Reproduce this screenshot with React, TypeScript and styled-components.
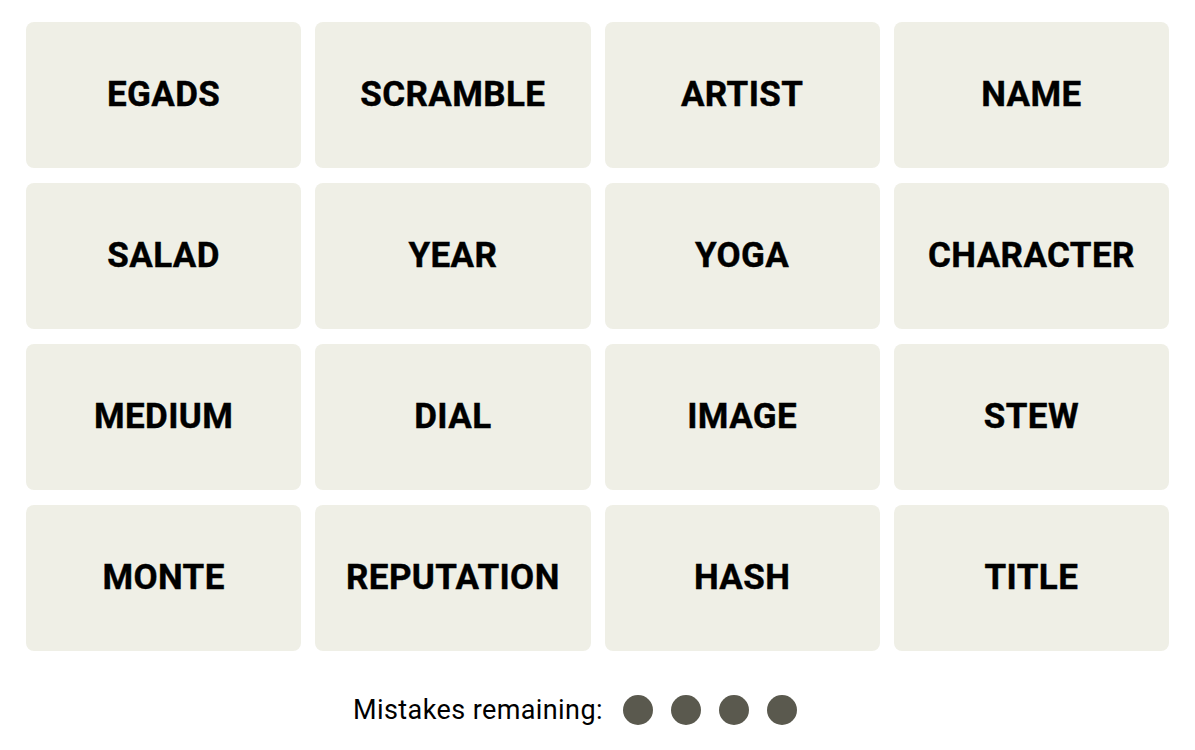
import styled, { createGlobalStyle } from 'styled-components';

const GlobalStyle = createGlobalStyle`
  body {
    margin: 0;
    background: #ffffff;
    font-family: Roboto, "Liberation Sans", sans-serif;
  }
`;

const Page = styled.main`
  width: 1195px;
  padding: 22px 26px 0;
  box-sizing: border-box;
`;

const Board = styled.div`
  display: grid;
  grid-template-columns: repeat(4, 1fr);
  grid-auto-rows: 146px;
  column-gap: 14px;
  row-gap: 15px;
`;

const Tile = styled.button`
  display: flex;
  align-items: center;
  justify-content: center;
  padding: 0 0 2px;
  border: none;
  border-radius: 8px;
  background: #efefe6;
  color: #000000;
  font-family: Roboto, "Liberation Sans", sans-serif;
  font-weight: 700;
  font-size: 35px;
  letter-spacing: 0.4px;
  text-transform: uppercase;
  -webkit-text-stroke: 0.4px #000;
  cursor: pointer;
`;

const Mistakes = styled.div`
  display: flex;
  align-items: center;
  justify-content: center;
  gap: 20px;
  margin-top: 43px;
`;

const Label = styled.p`
  margin: 0;
  font-size: 27px;
  letter-spacing: 0.4px;
  color: #000000;
`;

const Dots = styled.div`
  display: flex;
  gap: 18px;
  width: 219px;
`;

const Dot = styled.span`
  width: 30px;
  height: 30px;
  border-radius: 50%;
  background: #5a594e;
`;

const words = [
  'EGADS', 'SCRAMBLE', 'ARTIST', 'NAME',
  'SALAD', 'YEAR', 'YOGA', 'CHARACTER',
  'MEDIUM', 'DIAL', 'IMAGE', 'STEW',
  'MONTE', 'REPUTATION', 'HASH', 'TITLE',
];

function App() {
  const remaining = 4;

  return (
    <>
      <GlobalStyle />
      <Page>
        <Board>
          {words.map((word) => (
            <Tile key={word}>{word}</Tile>
          ))}
        </Board>
        <Mistakes>
          <Label>Mistakes remaining:</Label>
          <Dots>
            {Array.from({ length: remaining }).map((_, i) => (
              <Dot key={i} />
            ))}
          </Dots>
        </Mistakes>
      </Page>
    </>
  );
}

export default App;
